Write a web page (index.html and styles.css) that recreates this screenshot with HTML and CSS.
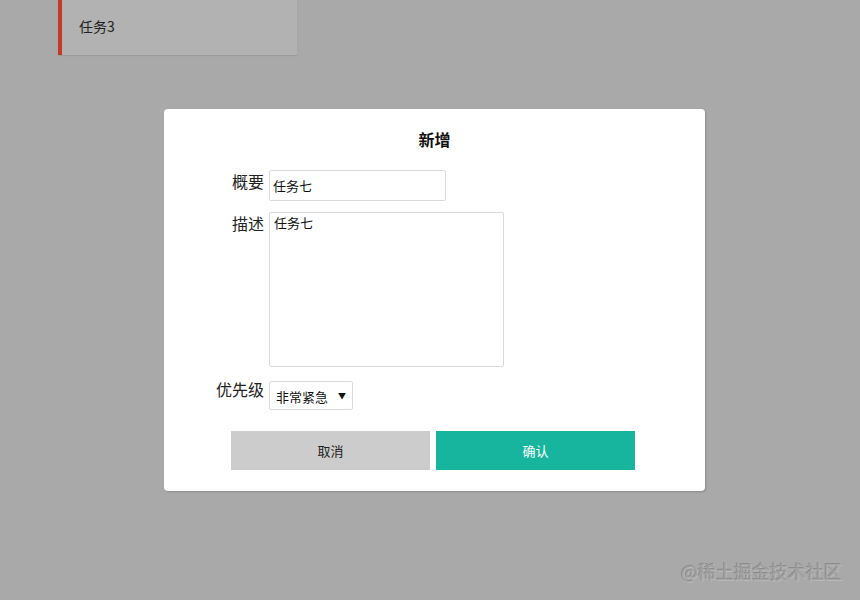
FILE: index.html
```html
<html>
	<head>
		<title>任务列表</title>
		<meta name="viewport" content="width=device-width, initial-scale=1">
		<link rel="stylesheet" href="styles.css">
	</head>
	<body>
		<div class="task">任务3</div>

		<div class="dialog">
			<h2 class="dialogTitle">新增</h2>
			<div class="form">
				<label class="label" for="summary">概要</label>
				<input class="input" id="summary" type="text" value="任务七">

				<label class="label" for="desc">描述</label>
				<textarea class="textarea" id="desc">任务七</textarea>

				<label class="label" for="level">优先级</label>
				<div class="selectWrap">
					<select class="select" id="level">
						<option>非常紧急</option>
						<option>紧急</option>
						<option>一般</option>
					</select>
				</div>
			</div>
			<div class="actions">
				<button class="button buttonGray">取消</button>
				<button class="button buttonGreen">确认</button>
			</div>
		</div>

		<div class="watermark">@稀土掘金技术社区</div>
	</body>
</html>
```

FILE: styles.css
```css
html, body{margin: 0; padding: 0;}
body{background-color: #a9a9a9; height: 600px; overflow: hidden; font-family: "Noto Sans CJK SC", "Microsoft YaHei", sans-serif; color: #222;}

.task{margin-left: 58px; width: 218px; height: 55px; line-height: 52px; padding-left: 17px; background-color: #b2b2b2; border-left: 4px solid #c4392a; font-size: 14px; box-shadow: 0 1px 1px rgba(0,0,0,0.08);}

.dialog{margin: 54px 0 0 164px; width: 541px; box-sizing: border-box; padding: 20px 0 21px; background-color: #fff; border-radius: 4px; box-shadow: 1px 1px 2px rgba(0,0,0,0.18);}
.dialogTitle{margin: 0 0 21px; text-align: center; font-size: 16px; line-height: 20px; font-weight: bold; color: #111;}

.form{display: grid; grid-template-columns: 100px auto; column-gap: 5px; row-gap: 11px; justify-items: start; align-items: start;}
.label{justify-self: end; font-size: 16px; line-height: 22px; color: #222;}
.input, .textarea, .select{font-family: "Noto Sans CJK SC", "Microsoft YaHei", sans-serif; font-size: 13px; color: #111; border: 1px solid #dadada; border-radius: 2px; outline: none; background: #fff;}
.input{width: 177px; height: 31px; box-sizing: border-box; padding: 0 3px;}
.textarea{width: 235px; height: 155px; box-sizing: border-box; padding: 2px 4px; resize: none; line-height: 16px;}
.selectWrap{position: relative; margin-top: 3px;}
.selectWrap::after{content: "\25BC"; position: absolute; right: 7px; top: 9px; font-size: 8px; color: #111; pointer-events: none;}
.select{appearance: none; -webkit-appearance: none; width: 84px; height: 29px; box-sizing: border-box; padding: 2px 18px 0 6px;}

.actions{display: flex; justify-content: center; gap: 6px; margin: 21px 0 0 -3px;}
.button{width: 199px; height: 39px; border: none; font-family: "Noto Sans CJK SC", "Microsoft YaHei", sans-serif; font-size: 13px; cursor: pointer;}
.buttonGray{background-color: #cccccc; color: #222;}
.buttonGreen{background-color: #17b59d; color: #fff;}

.watermark{position: absolute; right: 18px; bottom: 18px; font-size: 18px; line-height: 22px; color: #a3a3a3; text-shadow: -1px -1px 0 #8c8c8c, 1px 1px 0 #b9b9b9;}
```
